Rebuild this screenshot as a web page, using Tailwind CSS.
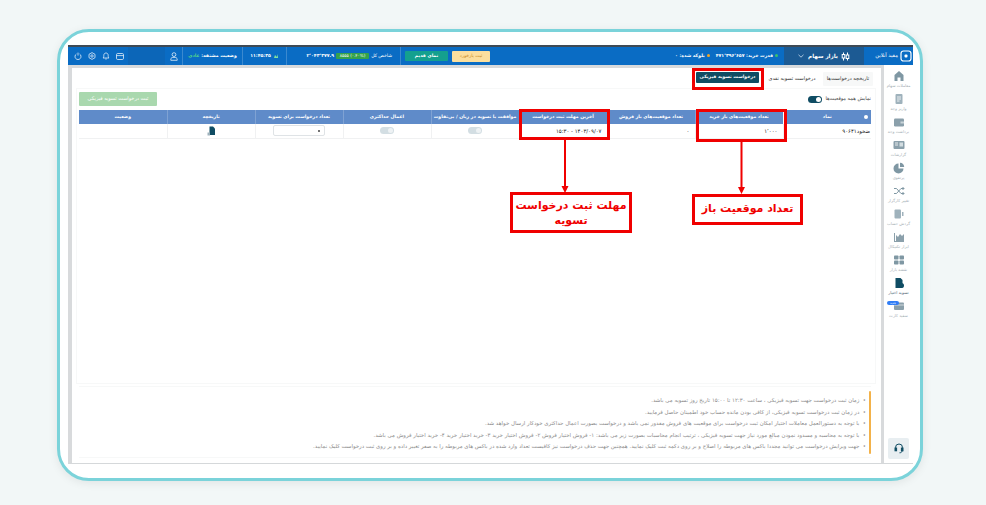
<!DOCTYPE html>
<html lang="fa" dir="rtl">
  <head>
    <meta charset="UTF-8" />
    <meta name="viewport" content="width=device-width, initial-scale=1.0" />
    <title>درخواست تسویه فیزیکی</title>
    <script src="https://cdn.jsdelivr.net/npm/@tailwindcss/browser@4"></script>
  </head>
  <body class="relative w-[986px] h-[505px] overflow-hidden bg-[#f2f7f7] font-['DejaVu_Sans',sans-serif]">
    <!-- قاب -->
    <div class="absolute left-[57px] top-[29px] w-[866px] h-[452px] bg-white border-[3px] border-[#7bd3da] rounded-[32px] shadow-[0_2px_10px_rgba(0,0,0,0.08)] pt-[13px] pr-[7px] pl-[8px]">
      <div class="flex flex-col h-[419px] border-b border-[#d5d8da]">
        <!-- هدر -->
        <header class="flex items-center h-[20px] bg-[#0a6cc4] border-t-2 border-[#3f4a55] text-white text-[4.6px] shrink-0 whitespace-nowrap">
          <div class="flex items-center gap-[2px] w-[49px] pr-[1px] h-full shrink-0">
            <svg width="12" height="12" viewBox="0 0 12 12" class="shrink-0"><rect x="1" y="1" width="10" height="10" rx="2.500" fill="none" stroke="#fff" stroke-width="1.200"/><rect x="4.500" y="4.500" width="3" height="3" rx="1" fill="#fff"/></svg>
            <span class="text-[5.2px]">مفید آنلاین</span>
          </div>
          <div class="flex items-center gap-[3px] w-[80px] h-full bg-[#1c5a93] justify-center font-bold text-[5.6px] shrink-0">
            <svg width="9" height="9" viewBox="0 0 9 9" fill="none" stroke="#fff" stroke-width="1"><path d="M2.500 0.500v8M6.500 0.500v8"/><rect x="1.200" y="2.500" width="2.600" height="3.500" fill="#1c5a93"/><rect x="5.200" y="3" width="2.600" height="3.500" fill="#1c5a93"/></svg>
            <span>بازار سهام</span>
            <svg width="6" height="4" viewBox="0 0 6 4" fill="none" stroke="#cfe0f0" stroke-width="0.800" class="mr-[1px]"><path d="M0.500 0.800 3 3.200 5.500 0.800"/></svg>
          </div>
          <div class="flex items-center gap-[2px] pr-[6px] w-[294px] shrink-0 font-semibold">
            <span class="w-[3px] h-[3px] rounded-full bg-[#37c16c]"></span><span>قدرت خرید: ۴۷۱٬۳۹۶٬۶۵۷</span>
            <span class="w-[3px] h-[3px] rounded-full bg-[#f5a623] mr-[4px]"></span><span>بلوکه شده: ۰</span>
          </div>
          <button class="flex items-center justify-center w-[38px] h-[11px] rounded-[1px] bg-[#fbdf9e] text-[#c98a25] text-[4.5px] shrink-0">ثبت بازخورد</button>
          <button class="flex items-center justify-center w-[43px] h-[10px] mr-[4px] rounded-[1px] bg-[#14a08e] font-bold text-[4.6px] shrink-0">نمای قدیم</button>
          <div class="flex items-center gap-[2px] h-full mr-[4px] pr-[8px] w-[114px] shrink-0 border-r border-white/20">
            <span>شاخص کل</span>
            <span class="bg-[#35a24a] rounded-[1px] text-center w-[33px] text-[4.2px] h-[6px] leading-[6px]">(۰.۴۰%) ۸۵۵۵</span>
            <span class="font-semibold">۲٬۰۴۳٬۳۷۷.۹</span>
          </div>
          <div class="flex items-center justify-center gap-[2px] h-full w-[44px] shrink-0 border-r border-white/20 font-semibold">
            <svg width="6" height="6" viewBox="0 0 6 6" fill="#7fe0a0"><path d="M1 5 2 2l2 2 1-3v4z"/></svg>
            <span>۱۱:۴۵:۳۵</span>
          </div>
          <div class="flex items-center justify-center h-full w-[61px] shrink-0 border-x border-white/20 font-semibold">
            <span>وضعیت مشتقه:&nbsp;<span class="text-[#54d68a]">عادی</span></span>
          </div>
          <div class="flex items-center justify-center w-[17px] shrink-0">
            <svg width="8" height="9" viewBox="0 0 8 9" fill="none" stroke="#fff" stroke-width="0.700"><circle cx="4" cy="2.600" r="1.900"/><path d="M0.800 8.300V7.200c0-1.200 1-1.800 3.200-1.800s3.200.6 3.200 1.800v1.100z"/></svg>
          </div>
          <div class="w-[37px] h-full bg-[#0c66b8] shrink-0"></div>
          <div class="flex items-center gap-[6px] mr-[4px]">
            <svg width="8" height="7" viewBox="0 0 8 7" fill="none" stroke="#fff" stroke-width="0.700"><rect x="0.500" y="0.500" width="7" height="6" rx="1.200"/><path d="M0.500 2.600h7"/></svg>
            <svg width="8" height="8" viewBox="0 0 8 8" fill="none" stroke="#fff" stroke-width="0.700"><path d="M1 6c.8-.7.8-1.400.8-2.600C1.800 2 2.700 1 4 1s2.200 1 2.200 2.400c0 1.200 0 1.900.8 2.600z"/><path d="M3.300 7h1.400"/></svg>
            <svg width="8" height="8" viewBox="0 0 8 8" fill="none" stroke="#fff" stroke-width="0.700"><path d="M4 .6 7 2.300v3.400L4 7.400 1 5.700V2.300z"/><circle cx="4" cy="4" r="1.200"/></svg>
            <svg width="8" height="8" viewBox="0 0 8 8" fill="none" stroke="#fff" stroke-width="0.700"><path d="M2.400 2a3 3 0 1 0 3.200 0"/><path d="M4 .6v3"/></svg>
          </div>
        </header>

        <div class="flex flex-1 min-h-0">
          <!-- منوی کناری -->
          <aside class="flex flex-col items-center w-[29px] shrink-0 pt-[5px] pb-[4px] text-[4px] text-[#a3adb2] whitespace-nowrap">
            <div class="h-[23px] flex flex-col items-center">
              <svg width="12" height="12" viewBox="0 0 12 12" fill="#7f97a3"><path d="M6 1 1.500 5v6h3V7.500h3V11h3V5z"/></svg>
              <span class="leading-[8px]">معاملات سهام</span>
            </div>
            <div class="h-[23px] flex flex-col items-center">
              <svg width="12" height="12" viewBox="0 0 12 12"><rect x="2.500" y="1" width="7" height="10" rx="1" fill="#9fb2bc"/><path d="M4 4h4M4 6h4M4 8h2.500" stroke="#fff" stroke-width="0.800"/></svg>
              <span class="leading-[8px]">واریز وجه</span>
            </div>
            <div class="h-[23px] flex flex-col items-center">
              <svg width="12" height="12" viewBox="0 0 12 12"><rect x="1" y="2.500" width="10" height="8" rx="1.200" fill="#8ba0ab"/><rect x="7.500" y="5.500" width="3.500" height="2" fill="#c9d4d9"/></svg>
              <span class="leading-[8px]">برداشت وجه</span>
            </div>
            <div class="h-[23px] flex flex-col items-center">
              <svg width="12" height="12" viewBox="0 0 12 12"><rect x="0.500" y="2" width="11" height="8" rx="1" fill="#8ba0ab"/><path d="M2 4h3M2 6h3" stroke="#fff" stroke-width="0.800"/><rect x="6.500" y="3.500" width="3.500" height="4" fill="#d3dde1"/></svg>
              <span class="leading-[8px]">گزارشات</span>
            </div>
            <div class="h-[23px] flex flex-col items-center">
              <svg width="12" height="12" viewBox="0 0 12 12" fill="#7f97a3"><path d="M5.500 1.500a5 5 0 1 0 5 5h-5z"/><path d="M7 .8a4.500 4.500 0 0 1 4.200 4.200H7z"/></svg>
              <span class="leading-[8px]">پرتفوی</span>
            </div>
            <div class="h-[23px] flex flex-col items-center">
              <svg width="12" height="12" viewBox="0 0 12 12" fill="none" stroke="#7f97a3" stroke-width="1"><path d="M1 3.500h2.500L8 8.500h3M1 8.500h2.500L8 3.500h3"/><path d="M9.500 2 11 3.500 9.500 5M9.500 7 11 8.500 9.500 10"/></svg>
              <span class="leading-[8px]">تغییر کارگزار</span>
            </div>
            <div class="h-[23px] flex flex-col items-center">
              <svg width="12" height="12" viewBox="0 0 12 12"><rect x="1.500" y="1.500" width="6.500" height="9" rx="1" fill="#9fb2bc"/><path d="M9 4h1.500v4H9z" fill="#9fb2bc"/></svg>
              <span class="leading-[8px]">گردش حساب</span>
            </div>
            <div class="h-[23px] flex flex-col items-center">
              <svg width="12" height="12" viewBox="0 0 12 12" fill="#8ba0ab"><path d="M1 2h1v8h9v1H1z"/><path d="M3 10V4l2 2 2-3 2 2 2-2v7z"/></svg>
              <span class="leading-[8px]">ابزار تکنیکال</span>
            </div>
            <div class="h-[23px] flex flex-col items-center">
              <svg width="12" height="12" viewBox="0 0 12 12" fill="#7f97a3"><rect x="1" y="1.500" width="4.500" height="4" rx="0.800"/><rect x="6.500" y="1.500" width="4.500" height="4" rx="0.800"/><rect x="1" y="6.500" width="4.500" height="4" rx="0.800"/><rect x="6.500" y="6.500" width="4.500" height="4" rx="0.800"/></svg>
              <span class="leading-[8px]">نقشه بازار</span>
            </div>
            <div class="h-[23px] flex flex-col items-center text-[#4a6270]">
              <svg width="12" height="12" viewBox="0 0 12 12" fill="#0f4c63"><path d="M2.500 1h5l2 2v8h-7z"/><circle cx="8.500" cy="8.500" r="2.500"/></svg>
              <span class="leading-[8px]">تسویه اختیار</span>
            </div>
            <div class="relative w-full h-[23px] flex flex-col items-center">
              <span class="absolute left-[3px] top-[1px] w-[12px] h-[4px] rounded-[2px] bg-[#2f7df6] text-white text-[3px] leading-[4px] text-center">جدید</span>
              <svg width="12" height="12" viewBox="0 0 12 12"><rect x="1" y="2.500" width="10" height="7.500" rx="1" fill="#8ba0ab"/><path d="M1 5h10" stroke="#e3e8ea" stroke-width="0.800"/></svg>
              <span class="leading-[8px]">سفید کارت</span>
            </div>
            <button class="mt-auto flex items-center justify-center w-[21px] h-[21px] rounded-[2px] bg-[#e8eef1]">
              <svg width="10" height="11" viewBox="0 0 10 11" fill="none" stroke="#0f4c63" stroke-width="1"><path d="M1.500 6V4.500a3.500 3.500 0 0 1 7 0V6"/><rect x="1" y="5" width="1.600" height="2.800" fill="#0f4c63"/><rect x="7.400" y="5" width="1.600" height="2.800" fill="#0f4c63"/><path d="M8 8c0 1.200-1 1.800-2.500 1.800"/></svg>
            </button>
          </aside>

          <!-- محتوا -->
          <main class="flex-1 min-w-0 border-t-[3px] border-r-[3px] border-l-4 border-[#d8dadc] pt-[4px] pr-[5px] pl-[4px] pb-[5px] flex flex-col">
            <div class="flex items-start gap-[4px] text-[5px] text-[#333] h-[16px] pr-[3px] whitespace-nowrap">
              <button class="h-[14px] w-[50px] bg-[#f7f8f8] rounded-[1px]">تاریخچه درخواست‌ها</button>
              <button class="h-[14px] w-[54px]">درخواست تسویه نقدی</button>
              <button class="h-[11px] w-[63px] mr-[2px] bg-[#0f4c63] text-white rounded-[1px] font-semibold text-[4.6px]">درخواست تسویه فیزیکی</button>
            </div>
            <section class="flex flex-col h-[296px] border border-[#f7f8f8] pr-[4px] pl-[2px] pt-[3px]">
              <div class="flex items-center justify-between h-[14px] mb-[4px]">
                <div class="flex items-center gap-[3px] text-[5px] text-[#444] whitespace-nowrap">
                  <span>نمایش همه موقعیت‌ها</span>
                  <span class="flex items-center justify-start w-[14px] h-[7px] rounded-full bg-[#0f4c63] px-[1px]"><span class="w-[5px] h-[5px] rounded-full bg-white"></span></span>
                </div>
                <button class="h-[14px] w-[78px] rounded-[1px] bg-[#a9d8ae] text-white text-[5px] whitespace-nowrap">ثبت درخواست تسویه فیزیکی</button>
              </div>
              <table class="w-full table-fixed text-[4.6px] border-collapse">
                <thead>
                  <tr class="h-[14px] bg-[#5f8bc9] text-white whitespace-nowrap">
                    <th class="relative border-l border-white/20 font-semibold">نماد<span class="absolute right-[3px] top-[5px] w-[4px] h-[4px] rounded-full bg-white"></span></th>
                    <th class="border-l border-white/20 font-semibold">تعداد موقعیت‌های باز خرید</th>
                    <th class="border-l border-white/20 font-semibold">تعداد موقعیت‌های باز فروش</th>
                    <th class="border-l border-white/20 font-semibold">آخرین مهلت ثبت درخواست</th>
                    <th class="border-l border-white/20 font-semibold">موافقت با تسویه در زیان / بی‌تفاوت</th>
                    <th class="border-l border-white/20 font-semibold">اعمال حداکثری</th>
                    <th class="border-l border-white/20 font-semibold">تعداد درخواست برای تسویه</th>
                    <th class="border-l border-white/20 font-semibold">تاریخچه</th>
                    <th class="font-semibold">وضعیت</th>
                  </tr>
                </thead>
                <tbody>
                  <tr class="h-[14px] border-b border-[#f0f1f2] text-[#222] text-[5.4px] whitespace-nowrap">
                    <td class="pr-[1px] border-l border-[#f0f1f2]">ضخود۹۰۶۴۱</td>
                    <td class="pr-[5px] border-l border-[#f0f1f2]">۱٬۰۰۰</td>
                    <td class="pr-[5px] border-l border-[#f0f1f2]">۰</td>
                    <td class="pr-[5px] text-right border-l border-[#f0f1f2]"><span dir="ltr">۱۵:۳۰ - ۱۴۰۳/۰۹/۰۷</span></td>
                    <td class="border-l border-[#f0f1f2]"><span class="flex items-center mx-auto w-[14px] h-[7px] rounded-full bg-[#d3dee3] px-[1px]"><span class="w-[5px] h-[5px] rounded-full bg-[#eef2f4]"></span></span></td>
                    <td class="border-l border-[#f0f1f2]"><span class="flex items-center mx-auto w-[14px] h-[7px] rounded-full bg-[#d3dee3] px-[1px]"><span class="w-[5px] h-[5px] rounded-full bg-[#eef2f4]"></span></span></td>
                    <td class="border-l border-[#f0f1f2]"><span class="flex items-center mx-auto w-[52px] h-[11px] bg-white border border-[#dfe3e6] rounded-[2px] pr-[4px]"><span class="w-[2px] h-[2px] rounded-full bg-[#444]"></span></span></td>
                    <td class="border-l border-[#f0f1f2]">
                      <svg width="9" height="10" viewBox="0 0 9 10" class="mx-auto"><path d="M2.500.5h3.500l2 2v6.500H2.500z" fill="#0f4c63"/><path d="M.5 6.500h2.500v3H.5z" fill="#9fb2bc"/></svg>
                    </td>
                    <td></td>
                  </tr>
                </tbody>
              </table>
            </section>
            <!-- توضیحات -->
            <section class="relative mt-[2px] mr-[5px] ml-[3px] h-[72px] border-y border-[#f7f8f8] pr-[5px] pt-[8px] text-[5.45px] text-[#8b8b8b] leading-[11.6px] whitespace-nowrap">
              <span class="absolute right-0 top-[4px] bottom-[3px] w-[2px] rounded-full bg-[#f3b24a]"></span>
              <p>•&nbsp;&nbsp;زمان ثبت درخواست جهت تسویه فیزیکی ، ساعت ۱۲:۳۰ تا ۱۵:۰۰ تاریخ روز تسویه می باشد.</p>
              <p>•&nbsp;&nbsp;در زمان ثبت درخواست تسویه فیزیکی، از کافی بودن مانده حساب خود اطمینان حاصل فرمایید.</p>
              <p>•&nbsp;&nbsp;با توجه به دستورالعمل معاملات اختیار امکان ثبت درخواست برای موقعیت های فروش مقدور نمی باشد و درخواست بصورت اعمال حداکثری خودکار ارسال خواهد شد.</p>
              <p>•&nbsp;&nbsp;با توجه به محاسبه و مسدود نمودن مبالغ مورد نیاز جهت تسویه فیزیکی ، ترتیب انجام محاسبات بصورت زیر می باشد: ۱- فروش اختیار فروش ۲- فروش اختیار خرید ۳- خرید اختیار خرید ۴- خرید اختیار فروش می باشد.</p>
              <p>•&nbsp;&nbsp;جهت ویرایش درخواست می توانید مجددا باکس های مربوطه را اصلاح و بر روی دکمه ثبت کلیک نمایید. همچنین جهت حذف درخواست نیز کافیست تعداد وارد شده در باکس های مربوطه را به صفر تغییر داده و بر روی ثبت درخواست کلیک نمایید.</p>
            </section>
          </main>
        </div>
      </div>
    </div>

    <!-- حاشیه‌نویسی قرمز روی تصویر -->
    <div class="absolute left-[692px] top-[68px] w-[72px] h-[22px] border-[3px] border-[#f00000]"></div>
    <div class="absolute left-[696px] top-[109px] w-[91px] h-[33px] border-[3px] border-[#f00000]"></div>
    <div class="absolute left-[519px] top-[109px] w-[91px] h-[31px] border-[3px] border-[#f00000]"></div>
    <svg class="absolute left-[0px] top-[0px]" width="986" height="505" fill="#f00000">
      <path d="M740.500 141h2v47h-2zM564 139h2v48h-2z"/>
      <path d="M738 187h7l-3.500 7zM561.500 186h7l-3.500 7z"/>
    </svg>
    <div class="absolute left-[692px] top-[194px] w-[111px] h-[31px] flex items-center justify-center border-[3px] border-[#f00000] bg-white text-[#f00000] font-bold text-[11px] whitespace-nowrap">تعداد موقعیت باز</div>
    <div class="absolute left-[510px] top-[192px] w-[122px] h-[41px] flex items-center justify-center text-center border-[3px] border-[#f00000] bg-white text-[#f00000] font-bold text-[11px] leading-[15px] whitespace-nowrap">مهلت ثبت درخواست<br />تسویه</div>
  </body>
</html>
